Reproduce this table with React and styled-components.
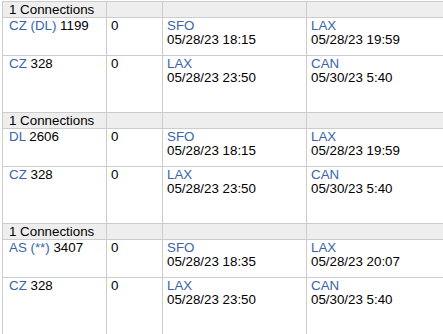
import React from 'react'
import styled, { createGlobalStyle } from 'styled-components'

const GlobalStyle = createGlobalStyle`
  html, body {
    margin: 0;
    padding: 0;
    background: #ffffff;
  }
  body {
    font-family: "Liberation Sans", Arial, sans-serif;
  }
`

const itineraries = [
  {
    connections: 1,
    legs: [
      { carrier: 'CZ', operatedBy: '(DL)', flight: '1199', stops: 0, from: 'SFO', dep: '05/28/23 18:15', to: 'LAX', arr: '05/28/23 19:59' },
      { carrier: 'CZ', flight: '328', stops: 0, from: 'LAX', dep: '05/28/23 23:50', to: 'CAN', arr: '05/30/23 5:40' },
    ],
  },
  {
    connections: 1,
    legs: [
      { carrier: 'DL', flight: '2606', stops: 0, from: 'SFO', dep: '05/28/23 18:15', to: 'LAX', arr: '05/28/23 19:59' },
      { carrier: 'CZ', flight: '328', stops: 0, from: 'LAX', dep: '05/28/23 23:50', to: 'CAN', arr: '05/30/23 5:40' },
    ],
  },
  {
    connections: 1,
    legs: [
      { carrier: 'AS', operatedBy: '(**)', flight: '3407', stops: 0, from: 'SFO', dep: '05/28/23 18:35', to: 'LAX', arr: '05/28/23 20:07' },
      { carrier: 'CZ', flight: '328', stops: 0, from: 'LAX', dep: '05/28/23 23:50', to: 'CAN', arr: '05/30/23 5:40' },
    ],
  },
]

export default function App() {
  return (
    <>
      <GlobalStyle />
      <Wrap>
        <Table>
          <colgroup>
            <col style={{ width: 104 }} />
            <col style={{ width: 56 }} />
            <col style={{ width: 144 }} />
            <col />
          </colgroup>
          <tbody>
            {itineraries.map((it, i) => (
              <React.Fragment key={i}>
                <HeaderRow>
                  <HeadCell first>{it.connections} Connections</HeadCell>
                  <HeadCell />
                  <HeadCell />
                  <HeadCell />
                </HeaderRow>
                {it.legs.map((leg, j) => (
                  <LegRow key={j} tall={j === it.legs.length - 1}>
                    <Cell first>
                      <Code>{leg.carrier}</Code>
                      {leg.operatedBy && <Code> {leg.operatedBy}</Code>} {leg.flight}
                    </Cell>
                    <Cell>{leg.stops}</Cell>
                    <Cell>
                      <Code>{leg.from}</Code>
                      <br />
                      {leg.dep}
                    </Cell>
                    <Cell>
                      <Code>{leg.to}</Code>
                      <br />
                      {leg.arr}
                    </Cell>
                  </LegRow>
                ))}
              </React.Fragment>
            ))}
          </tbody>
        </Table>
      </Wrap>
    </>
  )
}

const Wrap = styled.div`
  box-sizing: border-box;
  width: 443px;
  height: 334px;
  padding: 1px 0 0 2px;
  overflow: hidden;
`

const Table = styled.table`
  border-collapse: collapse;
  table-layout: fixed;
  width: 445px;
  font-size: 13.33px;
  line-height: 14px;
  color: #000000;
`

const HeaderRow = styled.tr`
  height: 16px;
  background: #eeeeee;
`

const HeadCell = styled.td`
  border: 1px solid #cccccc;
  padding: 0 ${props => (props.first ? '6px' : '4px')};
  vertical-align: middle;
  white-space: nowrap;
`

const LegRow = styled.tr`
  height: ${props => (props.tall ? '57px' : '38px')};
`

const Cell = styled.td`
  border: 1px solid #cccccc;
  padding: 1px ${props => (props.first ? '6px' : '4px')} 0;
  vertical-align: top;
  white-space: nowrap;
`

const Code = styled.span`
  color: #3a64a8;
`
